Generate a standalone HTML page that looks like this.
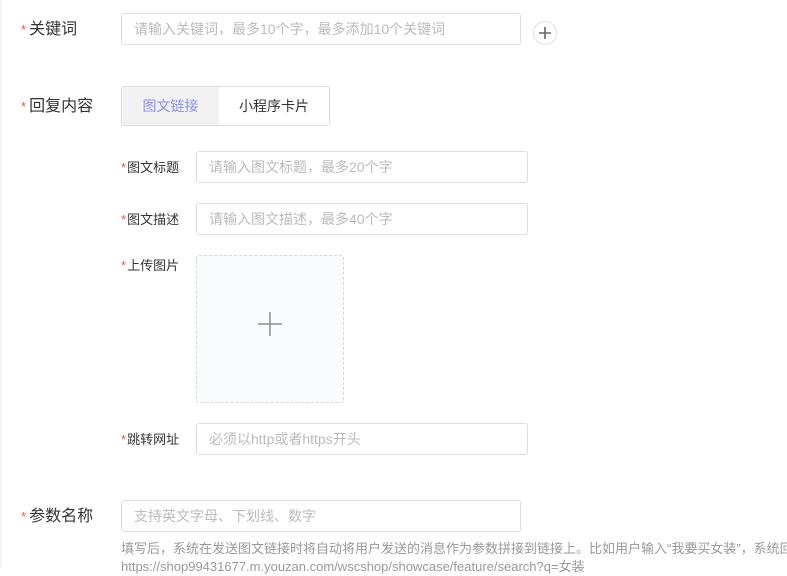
<!DOCTYPE html><html><head><meta charset="utf-8"><style>
body{margin:0;width:787px;height:568px;overflow:hidden;background:#fff;font-family:"Liberation Sans","Noto Sans CJK SC",sans-serif;position:relative}
.a{position:absolute;white-space:nowrap}
.l{font-size:16px;color:#333;line-height:20px}
.s{font-size:13px;color:#333;line-height:18px}
.st{color:#f5533d;margin-right:3px}
.in{position:absolute;border:1px solid #dcdee0;border-radius:3px;box-sizing:border-box;color:#bbb;font-size:14px;padding-left:12px}
</style></head><body>
<div style="position:absolute;left:0;top:0;width:2px;height:568px;background:#f2f3f5"></div>
<div class="a l" style="left:21px;top:20px"><span class="st" style="font-size:13px">*</span>关键词</div>
<div class="in" style="left:121px;top:13px;width:400px;height:32px;line-height:30px">请输入关键词，最多10个字，最多添加10个关键词</div>
<div class="a" style="left:533px;top:21px;width:24px;height:24px;border:1px solid #e0e0e0;border-radius:50%;box-sizing:border-box"><svg width="24" height="24" style="position:absolute;left:-1px;top:-1px"><path d="M6 12h12M12 6v12" stroke="#666" stroke-width="1.6"/></svg></div>
<div class="a l" style="left:21px;top:97px"><span class="st" style="font-size:13px">*</span>回复内容</div>
<div class="a" style="left:121px;top:86px;width:209px;height:40px;border:1px solid #dcdee0;border-radius:3px;box-sizing:border-box;overflow:hidden;font-size:14px">
<div style="position:absolute;left:0;top:0;width:97px;height:38px;background:#f2f2f2;color:#8b8ff5;text-align:center;line-height:38px">图文链接</div>
<div style="position:absolute;left:97px;top:0;width:110px;height:38px;color:#333;text-align:center;line-height:38px">小程序卡片</div></div>
<div class="a s" style="left:121px;top:159px"><span class="st" style="margin-right:1px">*</span>图文标题</div>
<div class="in" style="left:196px;top:151px;width:332px;height:32px;line-height:30px">请输入图文标题，最多20个字</div>
<div class="a s" style="left:121px;top:211px"><span class="st" style="margin-right:1px">*</span>图文描述</div>
<div class="in" style="left:196px;top:203px;width:332px;height:32px;line-height:30px">请输入图文描述，最多40个字</div>
<div class="a s" style="left:121px;top:257px"><span class="st" style="margin-right:1px">*</span>上传图片</div>
<div class="a" style="left:196px;top:255px;width:148px;height:148px;border:1px dashed #d8d8d8;border-radius:3px;box-sizing:border-box;background:#fafbfd"><svg width="146" height="146" style="position:absolute;left:0;top:0"><path d="M61 68h24M73 56v24" stroke="#8a8e99" stroke-width="1.5"/></svg></div>
<div class="a s" style="left:121px;top:431px"><span class="st" style="margin-right:1px">*</span>跳转网址</div>
<div class="in" style="left:196px;top:423px;width:332px;height:32px;line-height:30px">必须以http或者https开头</div>
<div class="a l" style="left:21px;top:507px"><span class="st" style="font-size:13px">*</span>参数名称</div>
<div class="in" style="left:121px;top:500px;width:400px;height:32px;line-height:30px">支持英文字母、下划线、数字</div>
<div class="a" style="left:121px;top:540px;font-size:13px;color:#999;line-height:18px">填写后，系统在发送图文链接时将自动将用户发送的消息作为参数拼接到链接上。比如用户输入“我要买女装”，系统回<br>https://shop99431677.m.youzan.com/wscshop/showcase/feature/search?q=女装</div>
</body></html>
